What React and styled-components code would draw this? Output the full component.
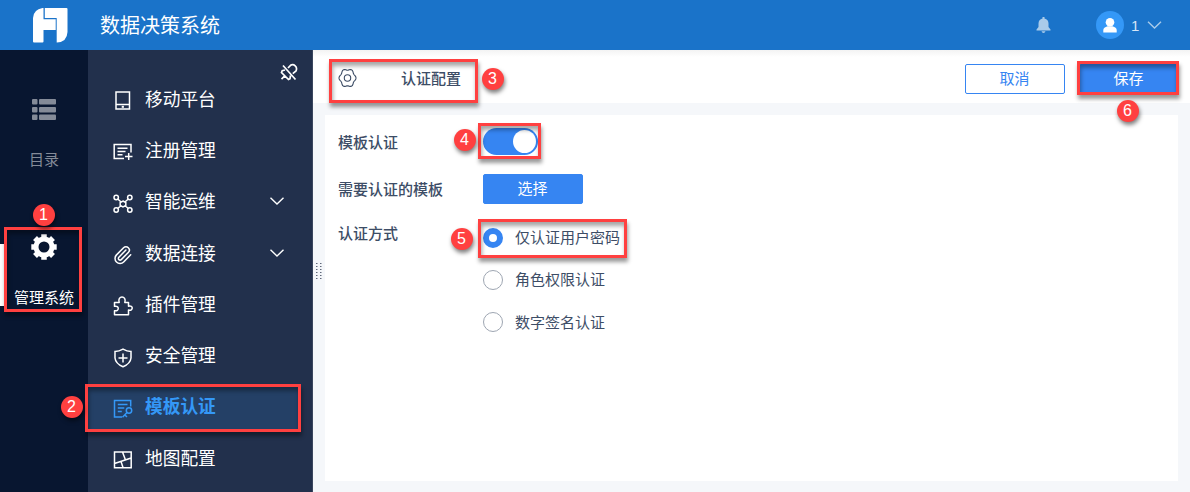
import styled, { createGlobalStyle } from 'styled-components';

const BLUE = '#3685f2';
const RED = '#ff4040';
const TEXT = '#3d4d66';

const GlobalStyle = createGlobalStyle`
  * {
    box-sizing: border-box;
  }

  body {
    margin: 0;
    font-family: 'Noto Sans CJK SC', sans-serif;
    overflow: hidden;
  }
`;

const Page = styled.div`
  position: relative;
  display: flex;
  flex-direction: column;
  width: 1190px;
  height: 492px;
  overflow: hidden;
  background: #f5f7fa;
`;

const TopBar = styled.header`
  display: flex;
  align-items: center;
  height: 50px;
  flex-shrink: 0;
  padding: 0 28px 0 32px;
  background: #1a73c9;
  color: #fff;
`;

const SystemTitle = styled.h1`
  flex: 1;
  margin: 0 0 0 32px;
  font-size: 20px;
  font-weight: 400;
  line-height: 50px;
`;

const Avatar = styled.div`
  display: flex;
  align-items: center;
  justify-content: center;
  width: 28px;
  height: 28px;
  margin: 0 7px 0 45px;
  border-radius: 50%;
  background: #3498f7;
`;

const UserName = styled.span`
  width: 8px;
  margin-right: 8px;
  font-family: 'Liberation Sans', sans-serif;
  font-size: 15px;
  color: #d7e6f6;
`;

const Body = styled.div`
  display: flex;
  flex: 1;
  min-height: 0;
`;

const Rail = styled.nav`
  display: flex;
  flex-direction: column;
  width: 88px;
  padding-top: 49px;
  background: #081630;
`;

const RailItem = styled.div`
  display: flex;
  flex-direction: column;
  align-items: center;
  justify-content: space-between;
  height: ${({ $active }) => ($active ? '74px' : '71px')};
  margin-bottom: 64px;
  background: ${({ $active }) => ($active ? 'linear-gradient(#fff, #fff) 0 10px / 4px 62px no-repeat' : 'none')};
  color: ${({ $active }) => ($active ? '#fff' : '#848b98')};
  font-size: 15px;
  line-height: 22px;
`;

const Menu = styled.nav`
  display: flex;
  flex-direction: column;
  width: 225px;
  background: #22304c;
  border-right: 1px solid #3a465e;
`;

const PinRow = styled.div`
  display: flex;
  justify-content: flex-end;
  height: 24px;
  padding: 13px 14px 0 0;
`;

const MenuItem = styled.div`
  display: flex;
  align-items: center;
  height: 51.3px;
  padding: 0 16px 0 25px;
  border: solid transparent;
  border-width: 4px 12px 4px 0;
  background: ${({ $active }) => ($active ? '#244066' : 'transparent')};
  background-clip: padding-box;
  color: ${({ $active }) => ($active ? '#3498f7' : '#fff')};
  font-weight: ${({ $active }) => ($active ? 700 : 400)};
  font-size: 17.7px;
  line-height: 26px;

  > svg:first-child {
    margin-top: 3px;
  }

  > svg:last-child {
    margin-bottom: 2px;
  }
`;

const MenuLabel = styled.span`
  flex: 1;
  margin-left: 12px;
  padding-bottom: 4px;
`;

const Splitter = styled.div`
  display: flex;
  align-items: center;
  justify-content: center;
  width: 12px;
  flex-shrink: 0;
`;

const Main = styled.main`
  display: flex;
  flex-direction: column;
  flex: 1;
  min-width: 0;
`;

const Toolbar = styled.div`
  display: flex;
  align-items: center;
  height: 53px;
  margin-left: -12px;
  padding: 5px 11px 0 25px;
  background: linear-gradient(#f3f3f3, #fff 7px);

  > svg {
    margin-bottom: 3px;
  }
`;

const ToolbarTitle = styled.h2`
  flex: 1;
  margin: 0 0 2px 44px;
  color: ${TEXT};
  font-size: 15px;
  font-weight: 500;
  line-height: 22px;
`;

const Button = styled.button`
  width: 100px;
  height: 30px;
  padding: 0 1px 2px 0;
  border: 1px solid ${BLUE};
  border-radius: 2px;
  background: ${({ $plain }) => ($plain ? '#fff' : BLUE)};
  color: ${({ $plain }) => ($plain ? BLUE : '#fff')};
  font-family: inherit;
  font-size: 15px;
  line-height: 26px;
`;

const ButtonPair = styled.div`
  display: flex;
  gap: 14px;
`;

const Panel = styled.section`
  display: flex;
  flex-direction: column;
  flex: 1;
  margin: 12px 12px 11px 0;
  padding: 11px 13px;
  background: #fff;
`;

const Field = styled.div`
  display: flex;
  align-items: ${({ $top }) => ($top ? 'flex-start' : 'center')};
  height: ${({ $h }) => $h}px;
  padding-top: ${({ $top }) => ($top ? '1px' : '0')};
`;

const FieldLabel = styled.div`
  width: 145px;
  color: ${TEXT};
  font-size: 15px;
  font-weight: 500;
  line-height: 22px;
`;

const Toggle = styled.div`
  display: flex;
  justify-content: flex-end;
  width: 55px;
  height: 27px;
  padding: 2px;
  border-radius: 14px;
  background: ${BLUE};

  &::after {
    content: '';
    width: 23px;
    height: 23px;
    border-radius: 50%;
    background: #fff;
  }
`;

const RadioGroup = styled.div`
  display: flex;
  flex-direction: column;
  gap: 19.4px;
  padding-top: 4px;
`;

const RadioRow = styled.label`
  display: flex;
  align-items: center;
  gap: 12px;
  color: ${TEXT};
  font-size: 15px;
  line-height: 22px;
`;

const RadioDot = styled.span`
  width: 20px;
  height: 20px;
  border: ${({ $checked }) => ($checked ? `6px solid ${BLUE}` : '1px solid #9ea6b2')};
  border-radius: 50%;
  background: #fff;
`;

const RadioText = styled.span`
  padding-bottom: 1px;
`;

const Frame = styled.div`
  position: absolute;
  left: ${({ $x }) => $x}px;
  top: ${({ $y }) => $y}px;
  width: ${({ $w }) => $w}px;
  height: ${({ $h }) => $h}px;
  border: 3px solid ${RED};
  box-shadow: 1px 4px 4px rgba(0, 0, 0, 0.4), inset 1px 4px 4px rgba(0, 0, 0, 0.35);
`;

const Badge = styled.div`
  position: absolute;
  left: ${({ $x }) => $x - 11}px;
  top: ${({ $y }) => $y - 11}px;
  width: 22px;
  height: 22px;
  border-radius: 50%;
  background: ${RED};
  box-shadow: 1px 3px 4px rgba(0, 0, 0, 0.5);
  color: #fff;
  font-family: 'Liberation Sans', sans-serif;
  font-size: 16px;
  line-height: 22px;
  text-align: center;
`;

const Logo = () => (
    <svg width="36" height="36" viewBox="0 0 36 36" fill="#fff">
        <path d="M10.500 1H11.500V12.300H23.700V23H11.500V34.500Q11.500 35.500 10.500 35.500H2Q1 35.500 1 34.500V11Q1.500 2.500 10.500 1Z" />
        <path d="M12.800 1H34.500Q35.500 1 35.500 2V25Q35 35 25 35.500H24.700V11H12.800Z" />
    </svg>
);

const Chevron = ({ color = '#fff', size = 14 }) => (
    <svg width={size} height="8" viewBox="0 0 14 8" fill="none" stroke={color} strokeWidth="1.4">
        <path d="M.5.7 7 7 13.500.7" />
    </svg>
);

// closed outline with six soft lobes
const lobes = Array.from({ length: 60 }, (_, i) => {
    const a = (i * Math.PI) / 30;
    const r = 7.8 + 0.7 * Math.cos(6 * a);
    return `${(9.5 + r * Math.cos(a)).toFixed(2)},${(9 + r * 1.1 * Math.sin(a)).toFixed(2)}`;
}).join(' ');

const icons = {
    mobile: (
        <>
            <path d="M3 1h13.500v17H3zM3 13.500h13.500" />
            <path d="M8.700 15.800h2.200" strokeWidth="2" />
        </>
    ),
    register: <path d="M11 16.500H1.200V2.500H18v8M4.500 6.200H14.500M4.500 9.500h8M4.500 12.800h5M12 14.500h7.500M15.700 11v7" />,
    ops: (
        <>
            <circle cx="3.200" cy="3.500" r="2.200" />
            <circle cx="16.800" cy="3.500" r="2.200" />
            <circle cx="3.200" cy="16" r="2.200" />
            <circle cx="16.800" cy="16" r="2.200" />
            <path d="m4.700 5 3.400 3M15.300 5l-3.400 3M4.700 14.500l3.400-3M15.300 14.500l-3.400-3M10 7l2.800 1.500v3L10 13l-2.800-1.500v-3z" />
        </>
    ),
    link: (
        <path
            transform="translate(-.5 0) scale(.84)"
            strokeWidth="1.8"
            strokeLinecap="round"
            d="m16 6-8.414 8.586a2 2 0 0 0 2.829 2.829l8.414-8.586a4 4 0 1 0-5.657-5.657l-8.379 8.551a6 6 0 1 0 8.485 8.485l8.379-8.551"
        />
    ),
    plugin: <path d="M1.500 6.500H6.200C5 3 7 1 9 1s4 2 2.800 5.500H15.500V10.300c5-1.500 5 5 0 3.700V18.700H1.500V14.700c5 1 5-5.400 0-4.400z" strokeLinejoin="round" />,
    shield: <path d="M10 1.200Q14 3.500 18 3.500V10Q17.500 15.500 10 18.800 2.500 15.500 2 10V3.500Q6 3.500 10 1.200ZM10 5.500v9M5.500 10h9" />,
    template: (
        <>
            <path d="M9 18H1.500V1.500h16.200v6M4.800 5.500h9.700M4.800 9h6.500M4.800 12.500h4" />
            <circle cx="16" cy="11.500" r="2.700" />
            <path d="m14 13.500-4.500 4.700M11.800 16l2.200 1.800" />
        </>
    ),
    map: <path d="M1.500 2h16.700v15.700H1.500zM1.500 13.500 18.200 8M9.500 2l3 8M8 11.500l2 6" />,
};

const MenuIcon = ({ name }) => (
    <svg width="20" height="20" viewBox="0 0 20 20" fill="none" stroke="currentColor" strokeWidth="1.5">
        {icons[name]}
    </svg>
);

const menuItems = [
    { label: '移动平台', icon: 'mobile' },
    { label: '注册管理', icon: 'register' },
    { label: '智能运维', icon: 'ops', expandable: true },
    { label: '数据连接', icon: 'link', expandable: true },
    { label: '插件管理', icon: 'plugin' },
    { label: '安全管理', icon: 'shield' },
    { label: '模板认证', icon: 'template', active: true },
    { label: '地图配置', icon: 'map' },
];

const methods = ['仅认证用户密码', '角色权限认证', '数字签名认证'];

const frames = [
    [4, 227, 78, 85],
    [85, 384, 216, 48],
    [329, 59, 149, 44],
    [478, 123, 63, 36],
    [478, 219, 149, 39],
    [1077, 61, 102, 34],
];

const badges = [
    [43.5, 215],
    [71.5, 406.5],
    [492.5, 79],
    [464.5, 140],
    [461.5, 238.5],
    [1127.5, 110.5],
];

const App = () => (
    <Page>
        <GlobalStyle />
        <TopBar>
            <Logo />
            <SystemTitle>数据决策系统</SystemTitle>
            <svg width="15" height="16" viewBox="0 0 15 16" fill="#a9cbea">
                <path d="M6.500 0h2v1.500Q12.500 2.500 12.500 6.500V10L14.500 12.500V13.500H.5V12.500L2.500 10V6.500Q2.500 2.500 6.500 1.500ZM5.500 14.300h4Q9 16 7.500 16T5.500 14.300Z" />
            </svg>
            <Avatar>
                <svg width="14" height="15" viewBox="0 0 14 15" fill="#fff">
                    <circle cx="7" cy="4.300" r="4.300" />
                    <path d="M.3 14.500V12Q.5 9.500 4.500 8.300h5Q13.500 9.500 13.700 12V14.500Z" />
                </svg>
            </Avatar>
            <UserName>1</UserName>
            <Chevron color="#a9cbea" size={15} />
        </TopBar>

        <Body>
            <Rail>
                <RailItem>
                    <svg width="24" height="22" viewBox="0 0 24 22" fill="currentColor">
                        {[0, 8, 15.5].map((y) => (
                            <g key={y}>
                                <rect y={y} width="5.500" height="5.500" rx="1" />
                                <rect x="7" y={y} width="17" height="5.500" rx="1" />
                            </g>
                        ))}
                    </svg>
                    目录
                </RailItem>
                <RailItem $active>
                    <svg width="26" height="26" viewBox="0 0 26 26" fill="none" stroke="currentColor">
                        <circle cx="13" cy="13" r="8" strokeWidth="5" />
                        <path d="M13 .3v4M13 21.700v4M.3 13h4M21.700 13h4M4 4l3 3M19 19l3 3M4 22l3-3M19 7l3-3" strokeWidth="5.500" />
                    </svg>
                    管理系统
                </RailItem>
            </Rail>

            <Menu>
                <PinRow>
                    <svg width="18" height="18" viewBox="0 0 18 18" fill="none" stroke="#fff" strokeWidth="1.700">
                        <path d="M3 2.500 15.500 16.500M8 5l2.500-2.700q2.500-1.500 4.700.5T16 8l-3.200 2.700M5 7l-2.800.8L1.500 9.500l7 7 1.500-.8.500-3.200M5 12.700l-3.500 3.500" />
                    </svg>
                </PinRow>
                {menuItems.map(({ label, icon, active, expandable }) => (
                    <MenuItem key={label} $active={active}>
                        <MenuIcon name={icon} />
                        <MenuLabel>{label}</MenuLabel>
                        {expandable && <Chevron />}
                    </MenuItem>
                ))}
            </Menu>

            <Splitter>
                <svg width="6" height="16" viewBox="0 0 6 16" fill="#60687a">
                    {[0, 3, 6, 9, 12, 15].map((y) => (
                        <path key={y} d={`M0 ${y}h1.500v1H0zM4 ${y}h1.500v1H4z`} />
                    ))}
                </svg>
            </Splitter>

            <Main>
                <Toolbar>
                    <svg width="19" height="18" viewBox="0 0 19 18" fill="none" stroke={TEXT} strokeWidth="1.100">
                        <polygon points={lobes} />
                        <circle cx="9.500" cy="9" r="3.200" />
                    </svg>
                    <ToolbarTitle>认证配置</ToolbarTitle>
                    <ButtonPair>
                        <Button $plain>取消</Button>
                        <Button>保存</Button>
                    </ButtonPair>
                </Toolbar>

                <Panel>
                    <Field $h={31}>
                        <FieldLabel>模板认证</FieldLabel>
                        <Toggle />
                    </Field>
                    <Field $h={64}>
                        <FieldLabel>需要认证的模板</FieldLabel>
                        <Button>选择</Button>
                    </Field>
                    <Field $top $h={130}>
                        <FieldLabel>认证方式</FieldLabel>
                        <RadioGroup>
                            {methods.map((method, i) => (
                                <RadioRow key={method}>
                                    <RadioDot $checked={i === 0} />
                                    <RadioText>{method}</RadioText>
                                </RadioRow>
                            ))}
                        </RadioGroup>
                    </Field>
                </Panel>
            </Main>
        </Body>

        {frames.map(([x, y, w, h]) => (
            <Frame key={`${x}-${y}`} $x={x} $y={y} $w={w} $h={h} />
        ))}
        {badges.map(([x, y], i) => (
            <Badge key={x} $x={x} $y={y}>
                {i + 1}
            </Badge>
        ))}
    </Page>
);

export default App;
